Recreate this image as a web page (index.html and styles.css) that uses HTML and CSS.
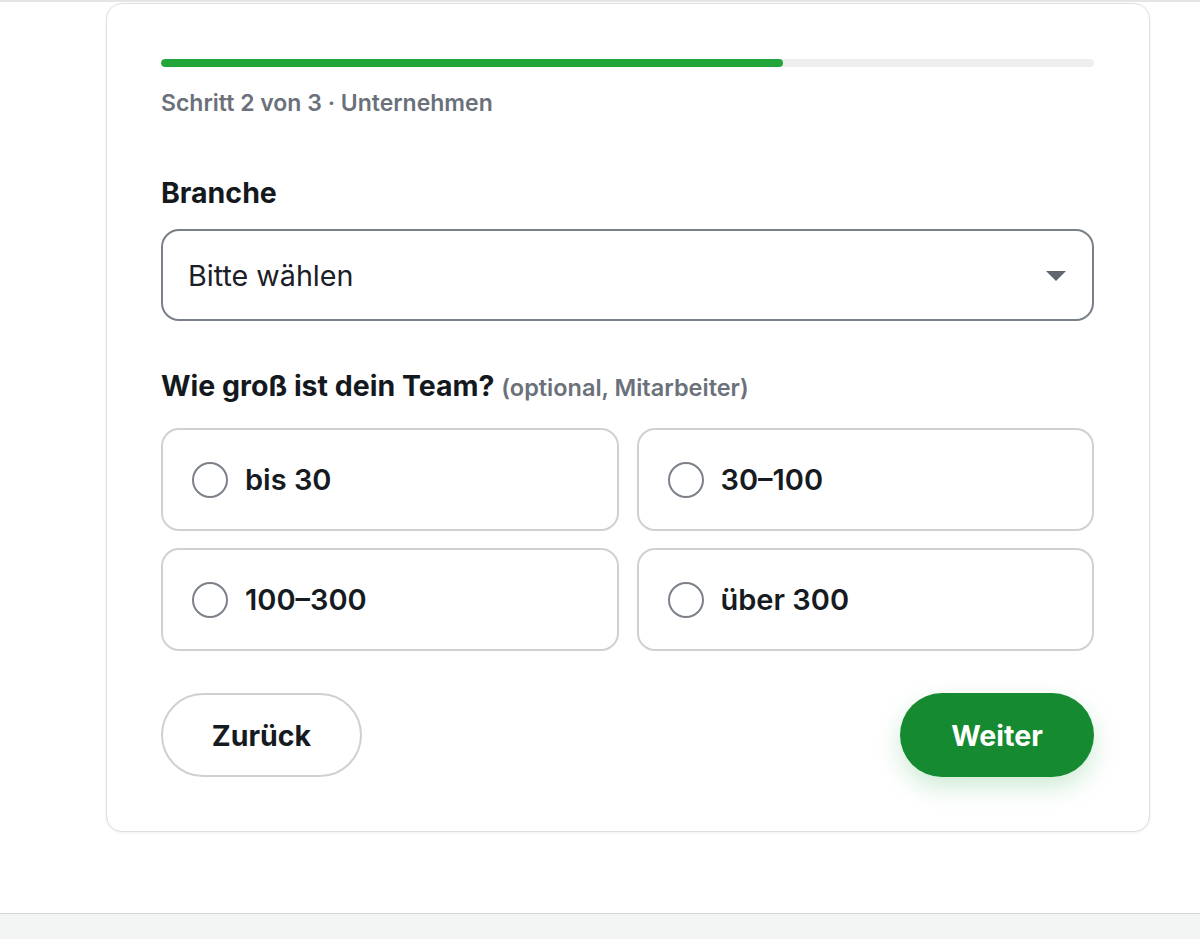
FILE: index.html
```html
<!DOCTYPE html>
<html lang="de">
<head>
<meta charset="utf-8">
<title>Schritt 2 von 3</title>
<link rel="stylesheet" href="styles.css">
</head>
<body>
<div class="topline"></div>
<main class="page">
  <section class="card">
    <div class="progress"><div class="progress-fill" style="width:66.7%"></div></div>
    <p class="step">Schritt 2 von 3 · Unternehmen</p>

    <label class="label label-branche">Branche</label>
    <div class="select">
      <span class="select-text">Bitte wählen</span>
      <svg class="select-arrow" width="20" height="10" viewBox="0 0 20 10"><path d="M0 0 H20 L10 10 Z" fill="#5f6670"/></svg>
    </div>

    <p class="label label-team">Wie groß ist dein Team? <span class="hint">(optional, Mitarbeiter)</span></p>
    <div class="options">
      <div class="option"><span class="radio"></span><span class="option-text">bis 30</span></div>
      <div class="option"><span class="radio"></span><span class="option-text">30–100</span></div>
      <div class="option"><span class="radio"></span><span class="option-text">100–300</span></div>
      <div class="option"><span class="radio"></span><span class="option-text">über 300</span></div>
    </div>

    <div class="actions">
      <button class="btn btn-back">Zurück</button>
      <button class="btn btn-next">Weiter</button>
    </div>
  </section>
</main>
<footer class="bottom"></footer>
</body>
</html>
```

FILE: styles.css
```css
* { box-sizing: border-box; }
html, body { margin: 0; padding: 0; }
body {
  font-family: Inter, "Noto Sans", "Liberation Sans", sans-serif;
  background: #ffffff;
  color: #161b22;
  width: 1200px;
  height: 939px;
  overflow: hidden;
  display: flex;
  flex-direction: column;
}
.topline {
  height: 2px;
  background: #e4e5e7;
  flex: none;
}
.page {
  flex: 1;
  padding: 1px 0 0 106px;
}
.card {
  width: 1044px;
  border: 1px solid #dedfe1;
  border-radius: 16px;
  background: #fff;
  box-shadow: 0 1px 3px rgba(0,0,0,0.06);
  padding: 55px 55px 54px 54px;
}
.progress {
  height: 8px;
  border-radius: 4px;
  background: #eeeeef;
  overflow: hidden;
}
.progress-fill {
  height: 100%;
  background: #22a63a;
  border-radius: 4px;
}
.step {
  margin: 22px 0 0;
  font-size: 23px;
  line-height: 28px;
  font-weight: 600;
  color: #6b717a;
}
.label {
  display: block;
  margin: 0;
  font-size: 28.5px;
  line-height: 34px;
  font-weight: 700;
  color: #141920;
}
.label-branche { margin-top: 59px; }
.select {
  margin-top: 19px;
  height: 92px;
  border: 2px solid #7a8089;
  border-radius: 18px;
  display: flex;
  align-items: center;
  justify-content: space-between;
  padding: 0 26px 0 25px;
}
.select-text {
  font-size: 28.7px;
  color: #1b2028;
}
.select-arrow { display: block; margin-top: 2px; }
.label-team { margin-top: 48px; }
.hint {
  font-size: 23.5px;
  font-weight: 600;
  color: #6b717a;
}
.options {
  margin-top: 23px;
  display: grid;
  grid-template-columns: 1fr 1fr;
  gap: 17px 18px;
}
.option {
  height: 103px;
  border: 2px solid #d0d1d3;
  border-radius: 18px;
  display: flex;
  align-items: center;
  padding-left: 29px;
  gap: 17px;
}
.radio {
  width: 36px;
  height: 36px;
  border: 2px solid #7b8189;
  border-radius: 50%;
  flex: none;
}
.option-text {
  font-size: 29px;
  font-weight: 600;
  color: #161b22;
}
.actions {
  margin-top: 42px;
  display: flex;
  justify-content: space-between;
}
.btn {
  font-family: inherit;
  height: 84px;
  border-radius: 42px;
  font-size: 28.5px;
  font-weight: 700;
  cursor: pointer;
}
.btn-back {
  width: 201px;
  background: #fff;
  border: 2px solid #cfd0d2;
  color: #161b22;
}
.btn-next {
  width: 194px;
  background: #158a30;
  border: none;
  color: #fff;
  box-shadow: 0 10px 24px rgba(34, 166, 58, 0.22);
}
.bottom {
  flex: none;
  height: 26px;
  border-top: 1px solid #d5d7da;
  background: #f3f4f4;
}
```
